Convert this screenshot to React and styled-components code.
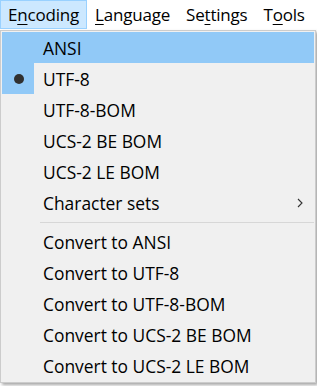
import React from "react";
import styled, { createGlobalStyle } from "styled-components";

const Global = createGlobalStyle`
  html, body { margin: 0; padding: 0; background: #ffffff; }
  body { font-family: "Open Sans", "Noto Sans", sans-serif; color: #000; }
`;

const Page = styled.div`
  position: relative;
  width: 317px;
  height: 386px;
  overflow: hidden;
  background: #ffffff;
`;

const MenuBar = styled.div`
  display: flex;
  align-items: flex-start;
  height: 30px;
  font-size: 17px;
`;

const BarItem = styled.div`
  box-sizing: border-box;
  height: 29px;
  display: flex;
  align-items: center;
  padding: 0 7px;
  border: 1px solid ${(p) => (p.$active ? "#99d1ff" : "transparent")};
  background: ${(p) => (p.$active ? "#cce8ff" : "transparent")};
  white-space: nowrap;
  letter-spacing: -0.2px;
`;

const Mn = styled.span`
  text-decoration: underline;
  text-underline-offset: 3px;
  text-decoration-thickness: 1px;
`;

const Menu = styled.div`
  box-sizing: border-box;
  width: 316px;
  border: 1px solid #cccccc;
  background: #f0f0f0;
  padding: 1px 1px;
  box-shadow: 2px 2px 3px rgba(0, 0, 0, 0.35);
  font-size: 17.4px;
`;

const Item = styled.div`
  position: relative;
  display: flex;
  align-items: center;
  height: 31px;
  padding-left: 41px;
  background: ${(p) => (p.$hover ? "#91c9f7" : "transparent")};
  white-space: nowrap;
  letter-spacing: 0;
`;

const CheckBox = styled.div`
  position: absolute;
  left: 0;
  top: 0;
  width: 32px;
  height: 31px;
  background: #91c9f7;
  display: flex;
  align-items: center;
  justify-content: center;
`;

const Dot = styled.div`
  width: 10px;
  height: 10px;
  border-radius: 50%;
  background: #303030;
  margin-left: 2px;
`;

const Arrow = styled.svg`
  position: absolute;
  right: 11px;
  top: 11px;
`;

const Separator = styled.div`
  height: 8px;
  display: flex;
  align-items: center;
  padding-left: 38px;
  &::after {
    content: "";
    flex: 1;
    height: 1px;
    background: #d7d7d7;
    margin-top: 1px;
  }
`;

const top = [
  { t: "ANSI", hover: true },
  { t: "UTF-8", checked: true },
  { t: "UTF-8-BOM" },
  { t: "UCS-2 BE BOM" },
  { t: "UCS-2 LE BOM" },
  { t: "Character sets", sub: true },
];

const bottom = [
  "Convert to ANSI",
  "Convert to UTF-8",
  "Convert to UTF-8-BOM",
  "Convert to UCS-2 BE BOM",
  "Convert to UCS-2 LE BOM",
];

export default function App() {
  return (
    <Page>
      <Global />
      <MenuBar>
        <BarItem $active>
          E<Mn>n</Mn>coding
        </BarItem>
        <BarItem>
          <Mn>L</Mn>anguage
        </BarItem>
        <BarItem>
          Se<Mn>t</Mn>tings
        </BarItem>
        <BarItem>
          T<Mn>o</Mn>ols
        </BarItem>
      </MenuBar>
      <Menu>
        {top.map((it) => (
          <Item key={it.t} $hover={it.hover}>
            {it.checked && (
              <CheckBox>
                <Dot />
              </CheckBox>
            )}
            {it.t}
            {it.sub && (
              <Arrow width="6" height="10" viewBox="0 0 6 10">
                <path d="M1 1 L5 5 L1 9" fill="none" stroke="#333" strokeWidth="1.1" />
              </Arrow>
            )}
          </Item>
        ))}
        <Separator />
        {bottom.map((t) => (
          <Item key={t}>{t}</Item>
        ))}
      </Menu>
    </Page>
  );
}
